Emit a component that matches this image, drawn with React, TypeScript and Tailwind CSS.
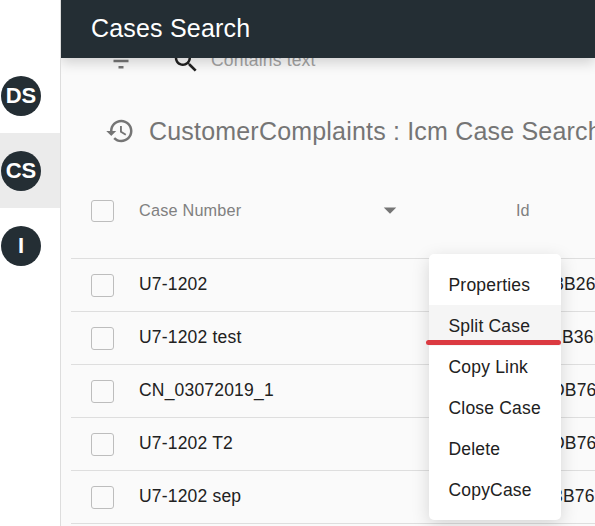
const avatars = [
  { label: 'DS', active: false },
  { label: 'CS', active: true },
  { label: 'I', active: false },
];

const rows = [
  { name: 'U7-1202', id: '8B26', offset: 'ml-[-4px]' },
  { name: 'U7-1202 test', id: 'B36F', offset: 'ml-[4px]' },
  { name: 'CN_03072019_1', id: 'DB76', offset: 'ml-[-6px]' },
  { name: 'U7-1202 T2', id: 'DB76', offset: 'ml-[-6px]' },
  { name: 'U7-1202 sep', id: '3B76', offset: 'ml-[-5px]' },
];

const menu = ['Properties', 'Split Case', 'Copy Link', 'Close Case', 'Delete', 'CopyCase'];

function Icon({ d, className }: { d: string; className: string }) {
  return (
    <svg viewBox="0 0 24 24" fill="currentColor" className={`h-[30px] w-[30px] shrink-0 ${className}`}>
      <path d={d} />
    </svg>
  );
}

function Checkbox({ className = 'h-[23px]' }: { className?: string }) {
  return <div className={`w-[23px] shrink-0 rounded-[3px] border border-[#bdbdbd] ${className}`} />;
}

export default function App() {
  return (
    <div className="relative flex h-[526px] w-[595px] overflow-hidden bg-white font-['Liberation_Sans',Arial,sans-serif] text-[#212121]">
      <nav className="relative z-20 w-[61px] shrink-0 border-r border-[#dddddd] bg-white pt-[58px]">
        {avatars.map((a) => (
          <div key={a.label} className={`flex h-[75px] items-center pl-px ${a.active ? 'bg-[#ebebeb]' : ''}`}>
            <div className="flex h-10 w-10 items-center justify-center rounded-full bg-[#242e34] text-[22px] font-bold text-white">
              {a.label}
            </div>
          </div>
        ))}
      </nav>

      <div className="flex w-[534px] shrink-0 flex-col">
        <header className="z-10 flex h-[58px] shrink-0 items-center bg-[#242e34] pl-[30px] text-[25px] tracking-[0.19px] text-white shadow-[0_5px_12px_rgba(0,0,0,0.16)]">
          Cases Search
        </header>

        <main className="h-[468px] overflow-hidden bg-[#fafafa]">
          <div className="-mt-3 flex h-[30px] items-center pl-[45px] whitespace-nowrap">
            <Icon className="text-[#757575]" d="M10 18h4v-2h-4v2zM3 6v2h18V6H3zm3 7h12v-2H6v2z" />
            <Icon
              className="ml-[34.5px] text-[#212121]"
              d="M15.5 14h-.79l-.28-.27C15.41 12.59 16 11.11 16 9.5 16 5.91 13.09 3 9.5 3S3 5.91 3 9.5 5.91 16 9.5 16c1.61 0 3.09-.59 4.23-1.57l.27.28v.79l5 4.99L20.49 19l-4.99-5zm-6 0C7.01 14 5 11.99 5 9.5S7.01 5 9.5 5 14 7.01 14 9.5 11.99 14 9.5 14z"
            />
            <span className="mb-[2px] ml-[10.5px] text-[17.5px] tracking-[0.19px] text-[#a3a3a3]">Contains text</span>
          </div>

          <div className="mt-10 flex h-[30px] items-center pl-[45px] whitespace-nowrap">
            <Icon
              className="-ml-px text-[#757575]"
              d="M13 3c-4.97 0-9 4.03-9 9H1l3.89 3.89.07.14L9 12H6c0-3.87 3.13-7 7-7s7 3.13 7 7-3.13 7-7 7c-1.93 0-3.68-.79-4.94-2.06l-1.42 1.42C8.27 19.99 10.51 21 13 21c4.97 0 9-4.03 9-9s-4.03-9-9-9zm-1 5v5l4.28 2.54.72-1.21-3.5-2.08V8H12z"
            />
            <h1 className="mt-[2px] ml-[14px] text-[25px] tracking-[0.19px] text-[#757575]">CustomerComplaints : Icm Case Search</h1>
          </div>

          <div className="mt-[18px] ml-[10px]">
            <div className="flex h-[95px] items-center border-b border-[#dedede] pb-px pl-5 text-[16.25px] text-[#808080]">
              <Checkbox className="h-[22px]" />
              <span className="ml-[25px] w-[236px] tracking-[0.2px]">Case Number</span>
              <Icon className="-mt-[2px] text-[#757575]" d="M7 10l5 5 5-5z" />
              <span className="ml-[111px]">Id</span>
            </div>
            {rows.map((r) => (
              <div key={r.name} className="flex h-[53px] items-center border-b border-[#dedede] pl-5 text-[17.5px] tracking-[0.19px] whitespace-nowrap">
                <Checkbox />
                <span className="ml-[25px] w-[419px] shrink-0 -translate-y-px">{r.name}</span>
                <span className={`shrink-0 -translate-y-px ${r.offset}`}>{r.id}</span>
              </div>
            ))}
          </div>
        </main>
      </div>

      <div className="absolute top-[254px] left-[429px] z-20 h-[266px] w-[132px] rounded-[5px] bg-white pt-[10px] shadow-[0_5px_18px_rgba(0,0,0,0.15)]">
        {menu.map((m) => (
          <div
            key={m}
            className={`flex h-[41px] items-center pt-[2px] pl-[19.5px] text-[17.5px] tracking-[0.19px] ${m === 'Split Case' ? 'bg-[#f5f5f5]' : ''}`}
          >
            {m}
          </div>
        ))}
        <div className="absolute top-[86px] -left-[3px] h-[5px] w-[135px] rounded-full bg-[#db3a41]" />
      </div>
    </div>
  );
}
